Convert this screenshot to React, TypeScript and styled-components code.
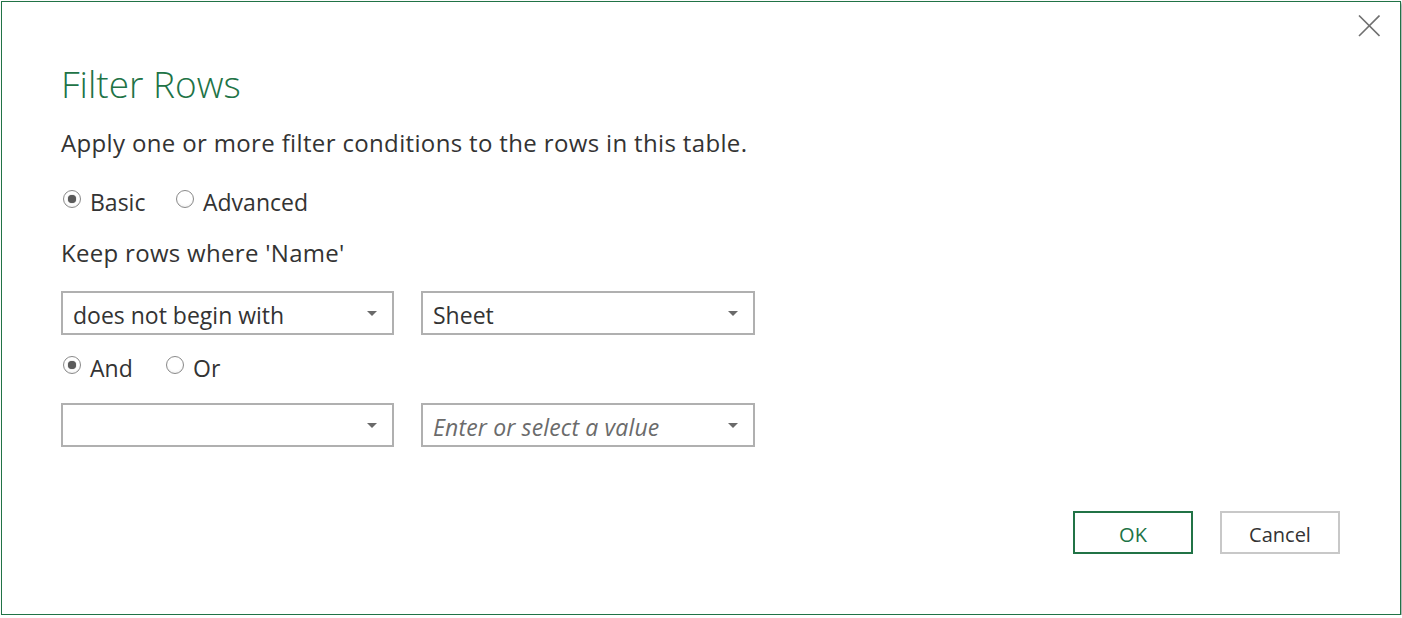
import React from "react";
import styled, { createGlobalStyle } from "styled-components";

const GlobalStyle = createGlobalStyle`
  html, body {
    margin: 0;
    padding: 0;
    background: #ffffff;
  }
  body {
    font-family: "Open Sans", "Noto Sans", sans-serif;
    color: #333333;
  }
`;

const Dialog = styled.div`
  box-sizing: border-box;
  margin: 1px 0 0 1px;
  width: 1400px;
  height: 614px;
  border: 1px solid #217346;
  background: #ffffff;
  box-shadow: 2px 2px 3px rgba(0, 0, 0, 0.35);
  display: flex;
  flex-direction: column;
`;

const TopBar = styled.div`
  display: flex;
  justify-content: flex-end;
  padding: 13px 20px 0 0;
  height: 22px;
`;

const CloseButton = styled.button`
  width: 22px;
  height: 22px;
  padding: 0;
  border: none;
  background: transparent;
  cursor: pointer;
  display: flex;
`;

const Body = styled.div`
  flex: 1;
  display: flex;
  flex-direction: column;
  padding: 23px 60px 60px 59px;
`;

const Title = styled.h1`
  margin: 0;
  font-size: 37px;
  font-weight: 300;
  line-height: 48px;
  color: #217346;
`;

const Subtitle = styled.p`
  margin: 20px 0 0 0;
  font-size: 24px;
  letter-spacing: 0.35px;
  line-height: 30px;
`;

const RadioRow = styled.div<{ $top: number }>`
  display: flex;
  margin-top: ${(p) => p.$top}px;
  height: 30px;
`;

const RadioLabel = styled.label<{ $width: number }>`
  display: flex;
  width: ${(p) => p.$width}px;
  font-size: 23px;
  line-height: 30px;
  cursor: pointer;
`;

const RadioCircle = styled.span<{ $checked?: boolean }>`
  box-sizing: border-box;
  flex: none;
  width: 18px;
  height: 18px;
  margin: 3px 9px 0 2px;
  border-radius: 50%;
  border: 1px solid #8a8a8a;
  background: radial-gradient(circle at 50% 40%, #ffffff 55%, #e2e2e2 100%);
  display: flex;
  align-items: center;
  justify-content: center;
  &::after {
    content: "";
    display: ${(p) => (p.$checked ? "block" : "none")};
    width: 8px;
    height: 8px;
    border-radius: 50%;
    background: #5a5a5a;
    box-shadow: 0 0 1px #5a5a5a;
  }
`;

const FieldLabel = styled.div`
  margin-top: 21px;
  font-size: 24px;
  letter-spacing: 0.3px;
  line-height: 30px;
`;

const SelectRow = styled.div<{ $top: number }>`
  display: flex;
  gap: 27px;
  margin-top: ${(p) => p.$top}px;
`;

const Select = styled.div<{ $width: number }>`
  box-sizing: border-box;
  width: ${(p) => p.$width}px;
  height: 44px;
  border: 2px solid #b0b0b0;
  background: #ffffff;
  display: flex;
  align-items: center;
  padding: 0 15px 0 10px;
`;

const SelectText = styled.span<{ $placeholder?: boolean }>`
  flex: 1;
  padding-top: 3px;
  font-size: 23px;
  line-height: 30px;
  letter-spacing: ${(p) => (p.$placeholder ? "0.15px" : "0")};
  color: ${(p) => (p.$placeholder ? "#6b6b6b" : "#333333")};
  font-style: ${(p) => (p.$placeholder ? "italic" : "normal")};
  white-space: nowrap;
`;

const Arrow = styled.span`
  width: 0;
  height: 0;
  border-left: 5px solid transparent;
  border-right: 5px solid transparent;
  border-top: 5px solid #6a6a6a;
  margin-top: 1px;
`;

const Footer = styled.div`
  margin-top: auto;
  display: flex;
  justify-content: flex-end;
  gap: 27px;
`;

const Button = styled.button<{ $primary?: boolean }>`
  box-sizing: border-box;
  width: 120px;
  height: 43px;
  background: #ffffff;
  border: 2px solid ${(p) => (p.$primary ? "#217346" : "#c8c8c8")};
  color: ${(p) => (p.$primary ? "#217346" : "#333333")};
  font-family: "Open Sans", "Noto Sans", sans-serif;
  font-size: 20px;
  padding: 3px 0 0 0;
  cursor: pointer;
`;

const CloseIcon = () => (
  <svg width="22" height="22" viewBox="0 0 22 22">
    <path d="M1 0.5 L21.5 21 M21.5 0.5 L1 21" stroke="#707070" strokeWidth="1.6" fill="none" />
  </svg>
);

export default function App() {
  return (
    <>
      <GlobalStyle />
      <Dialog>
        <TopBar>
          <CloseButton aria-label="Close">
            <CloseIcon />
          </CloseButton>
        </TopBar>
        <Body>
          <Title>Filter Rows</Title>
          <Subtitle>Apply one or more filter conditions to the rows in this table.</Subtitle>
          <RadioRow $top={29}>
            <RadioLabel $width={113}>
              <RadioCircle $checked />
              Basic
            </RadioLabel>
            <RadioLabel $width={160}>
              <RadioCircle />
              Advanced
            </RadioLabel>
          </RadioRow>
          <FieldLabel>Keep rows where 'Name'</FieldLabel>
          <SelectRow $top={23}>
            <Select $width={333}>
              <SelectText>does not begin with</SelectText>
              <Arrow />
            </Select>
            <Select $width={334}>
              <SelectText>Sheet</SelectText>
              <Arrow />
            </Select>
          </SelectRow>
          <RadioRow $top={18}>
            <RadioLabel $width={103}>
              <RadioCircle $checked />
              And
            </RadioLabel>
            <RadioLabel $width={80}>
              <RadioCircle />
              Or
            </RadioLabel>
          </RadioRow>
          <SelectRow $top={20}>
            <Select $width={333}>
              <SelectText />
              <Arrow />
            </Select>
            <Select $width={334}>
              <SelectText $placeholder>Enter or select a value</SelectText>
              <Arrow />
            </Select>
          </SelectRow>
          <Footer>
            <Button $primary>OK</Button>
            <Button>Cancel</Button>
          </Footer>
        </Body>
      </Dialog>
    </>
  );
}
